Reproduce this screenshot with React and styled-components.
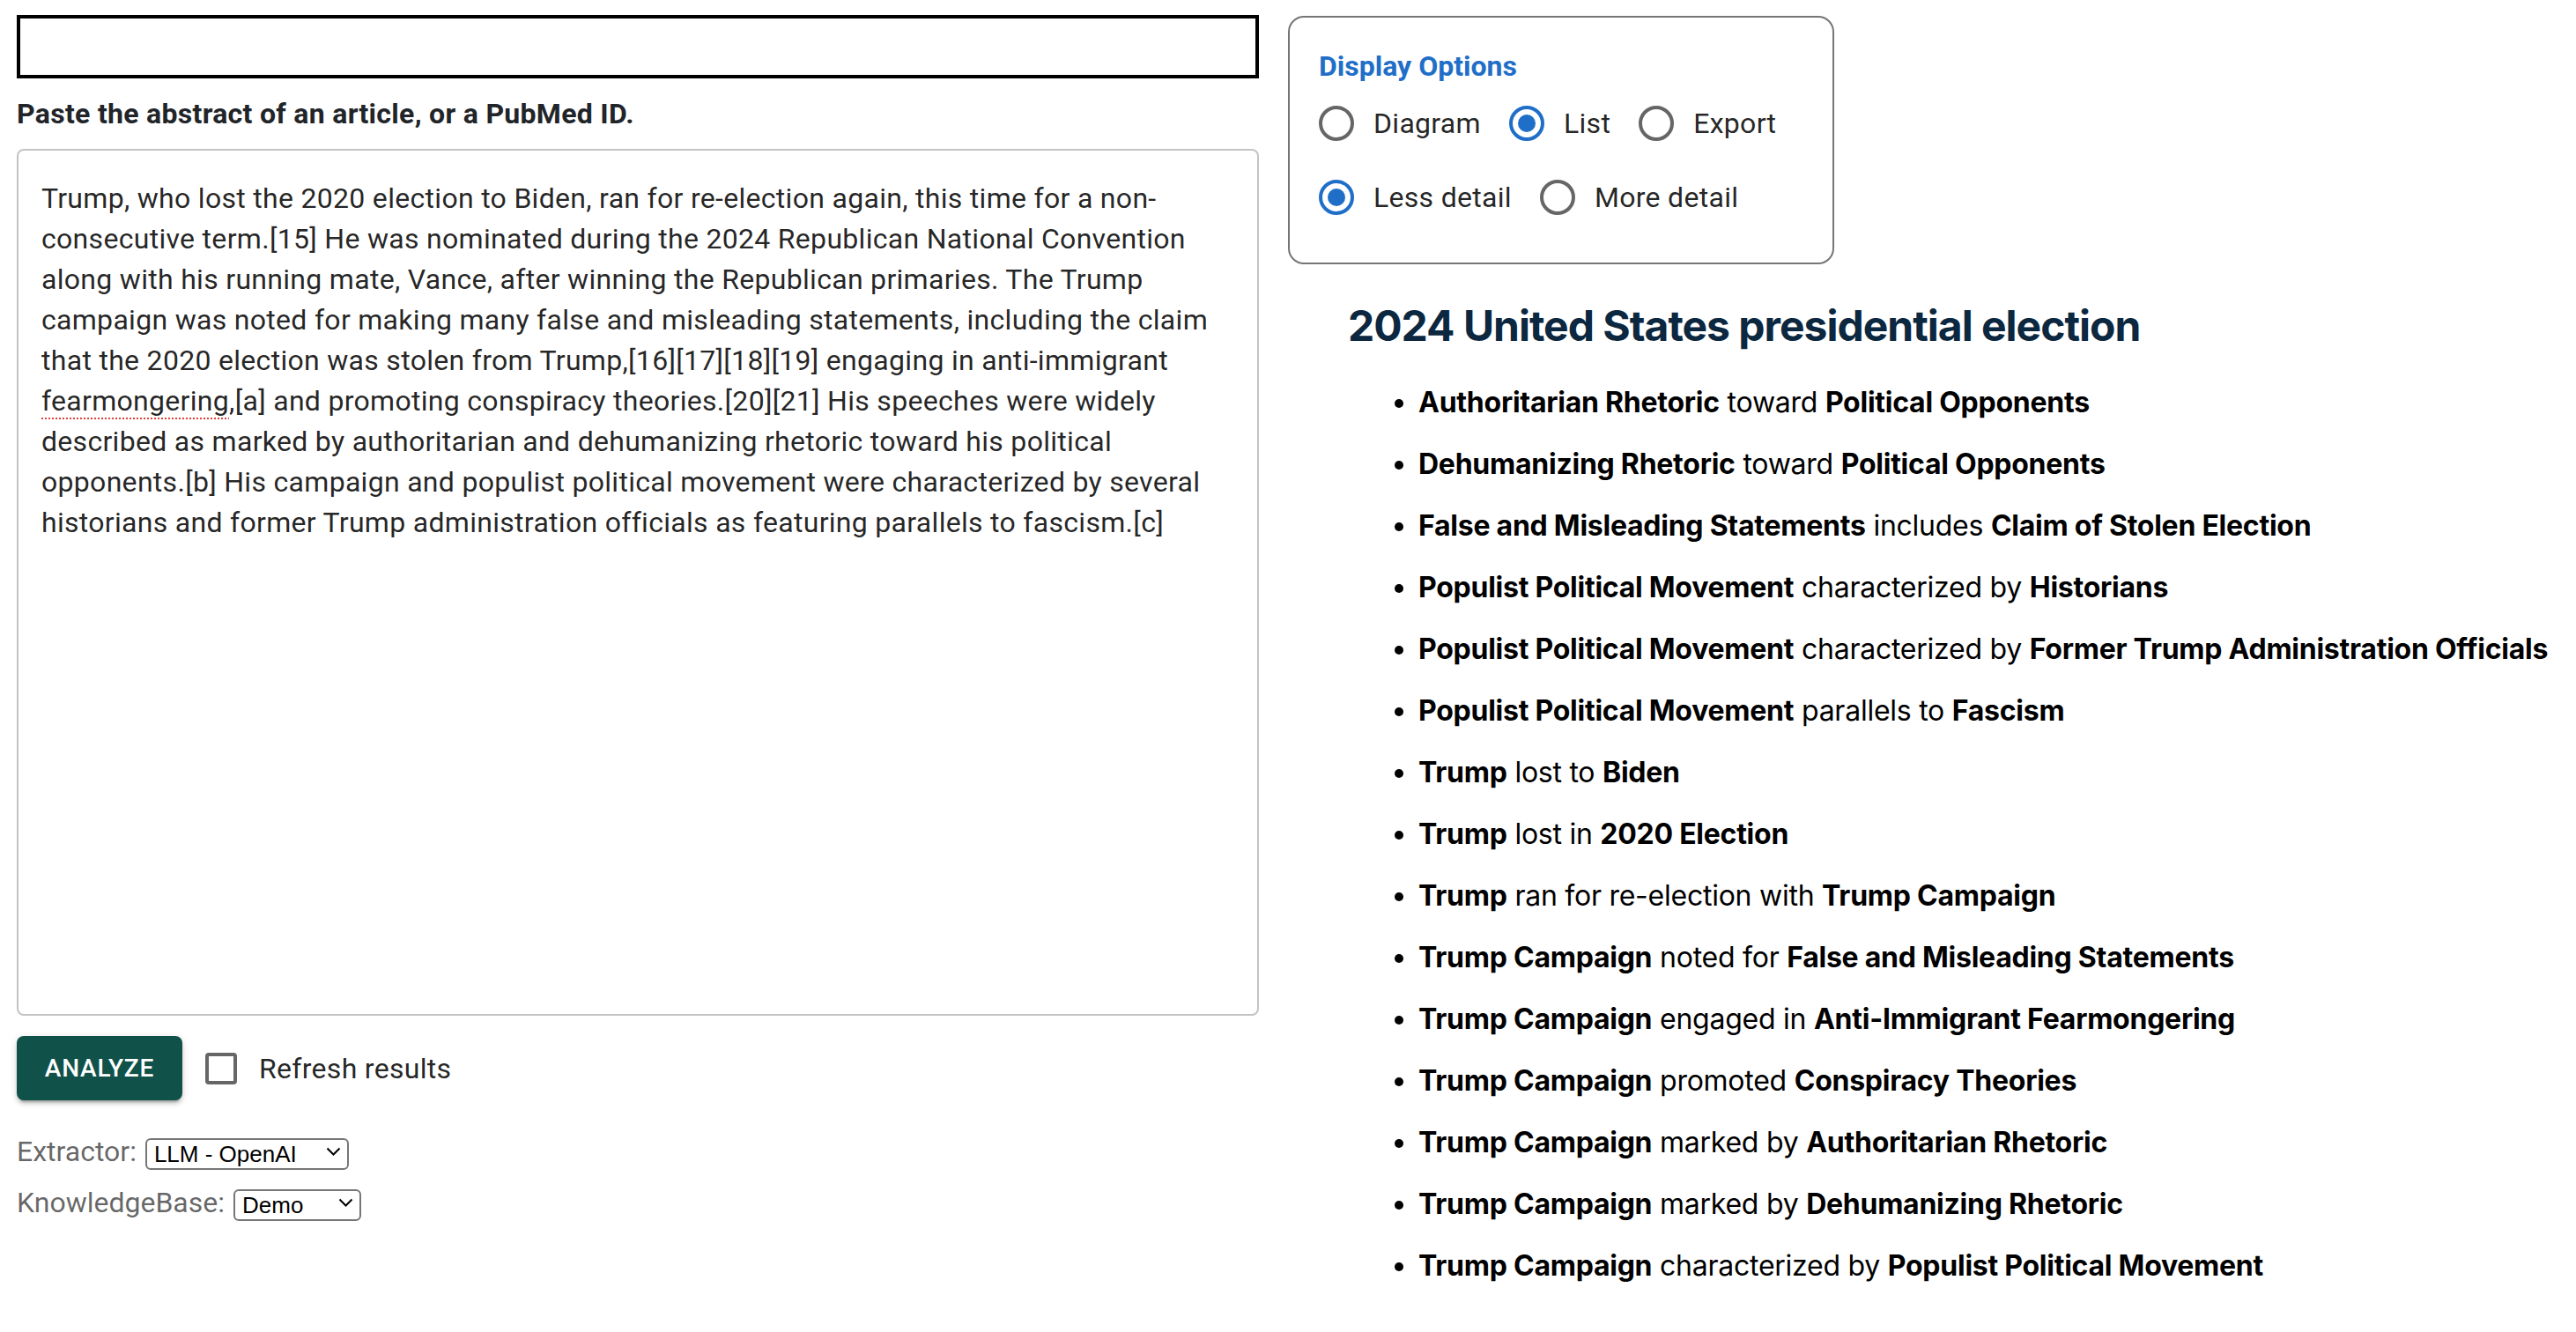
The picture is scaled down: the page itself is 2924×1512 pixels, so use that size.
import styled, { createGlobalStyle } from "styled-components";

const GlobalStyle = createGlobalStyle`
  html, body {
    margin: 0;
    padding: 0;
    background: #ffffff;
    overflow: hidden;
  }

  body {
    font-family: Roboto, "Liberation Sans", sans-serif;
  }
`;

const Page = styled.div`
  display: flex;
  align-items: flex-start;
  gap: 33px;
  padding: 17px 19px 0 19px;
`;

const LeftColumn = styled.div`
  display: flex;
  flex-direction: column;
  width: 1410px;
  flex-shrink: 0;
`;

const TopInput = styled.input`
  box-sizing: border-box;
  width: 100%;
  height: 72px;
  border: 4px solid #000000;
  border-radius: 0;
  outline: none;
  padding: 0 12px;
  font-family: Roboto, sans-serif;
  font-size: 32px;
`;

const PasteLabel = styled.label`
  display: block;
  margin: 16px 0 16px 0;
  font-family: Roboto, sans-serif;
  font-weight: 700;
  font-size: 32px;
  line-height: 48px;
  letter-spacing: 0.3px;
  color: #212529;
`;

const AbstractBox = styled.div`
  box-sizing: border-box;
  height: 984px;
  border: 2px solid #c4c4c4;
  border-radius: 8px;
  padding: 31px 26px;
  font-family: Roboto, sans-serif;
  font-size: 32px;
  line-height: 46px;
  letter-spacing: 0.3px;
  color: rgba(0, 0, 0, 0.87);
  white-space: pre-wrap;
  overflow: hidden;
`;

const Misspelled = styled.span`
  text-decoration: underline dotted #e0403a 2px;
  text-underline-offset: 8px;
`;

const ActionRow = styled.div`
  display: flex;
  align-items: center;
  margin-top: 23px;
`;

const AnalyzeButton = styled.button`
  box-sizing: border-box;
  width: 188px;
  height: 73px;
  border: none;
  border-radius: 8px;
  background: #10524a;
  color: #ffffff;
  font-family: Roboto, sans-serif;
  font-weight: 500;
  font-size: 28px;
  letter-spacing: 0.8px;
  text-transform: uppercase;
  box-shadow: 0px 6px 2px -4px rgba(0, 0, 0, 0.2),
    0px 4px 4px 0px rgba(0, 0, 0, 0.14), 0px 2px 10px 0px rgba(0, 0, 0, 0.12);
  cursor: pointer;
`;

const CheckLabel = styled.label`
  display: flex;
  align-items: center;
  margin-left: 26px;
  font-family: Roboto, sans-serif;
  font-size: 32px;
  letter-spacing: 0.3px;
  color: rgba(0, 0, 0, 0.87);
`;

const CheckBox = styled.span`
  box-sizing: border-box;
  width: 36px;
  height: 36px;
  border: 4px solid #666666;
  border-radius: 4px;
  margin-right: 25px;
`;

const SettingsList = styled.div`
  display: flex;
  flex-direction: column;
  gap: 20px;
  margin-top: 39px;
`;

const SettingRow = styled.div`
  display: flex;
  align-items: center;
  font-family: Roboto, sans-serif;
  font-size: 32px;
  color: rgba(0, 0, 0, 0.6);
`;

const SelectWrap = styled.span`
  position: relative;
  display: inline-block;
  margin-left: 10px;
  width: ${(p) => p.$width}px;
  height: 36px;
`;

const NativeSelect = styled.select`
  box-sizing: border-box;
  appearance: none;
  width: 100%;
  height: 100%;
  border: 2px solid #767676;
  border-radius: 6px;
  background: #ffffff;
  padding: 0 36px 0 8px;
  font-family: "Liberation Sans", Arial, sans-serif;
  font-size: 26px;
  color: #000000;
`;

const Chevron = styled.svg`
  position: absolute;
  right: 9px;
  top: 13px;
  pointer-events: none;
`;

const RightColumn = styled.div`
  display: flex;
  flex-direction: column;
  flex: 1;
  min-width: 0;
`;

const OptionsBox = styled.fieldset`
  box-sizing: border-box;
  width: fit-content;
  margin: 1px 0 0 0;
  border: 2px solid #767676;
  border-radius: 18px;
  padding: 32px 32px 32px 33px;
`;

const OptionsTitle = styled.div`
  font-family: Roboto, sans-serif;
  font-weight: 700;
  font-size: 32px;
  line-height: 46px;
  color: #1f6fc8;
`;

const RadioRow = styled.div`
  display: flex;
  align-items: center;
  height: 84px;
`;

const RadioLabel = styled.label`
  display: flex;
  align-items: center;
  margin-right: 32px;
  font-family: Roboto, sans-serif;
  font-size: 32px;
  letter-spacing: 0.3px;
  color: rgba(0, 0, 0, 0.87);
`;

const RadioCircle = styled.span`
  box-sizing: border-box;
  display: flex;
  align-items: center;
  justify-content: center;
  width: 40px;
  height: 40px;
  border-radius: 50%;
  border: 4px solid ${(p) => (p.$checked ? "#1f6fc8" : "#666666")};
  margin-right: 22px;

  &::after {
    content: "";
    display: ${(p) => (p.$checked ? "block" : "none")};
    width: 20px;
    height: 20px;
    border-radius: 50%;
    background: #1f6fc8;
  }
`;

const Results = styled.div`
  padding-left: 68px;
  font-family: Inter, "Liberation Sans", sans-serif;
`;

const ResultsTitle = styled.h2`
  margin: 41px 0 0 0;
  font-size: 48px;
  line-height: 57px;
  font-weight: 700;
  letter-spacing: -1px;
  color: #0c2840;
`;

const RelationList = styled.ul`
  margin: 35px 0 0 0;
  padding-left: 80px;
  color: #000000;
`;

const RelationItem = styled.li`
  font-size: 32px;
  line-height: 48px;
  margin-bottom: 22px;
  letter-spacing: -0.25px;
  white-space: nowrap;

  strong {
    font-weight: 700;
  }
`;

const relations = [
  ["Authoritarian Rhetoric", "toward", "Political Opponents"],
  ["Dehumanizing Rhetoric", "toward", "Political Opponents"],
  ["False and Misleading Statements", "includes", "Claim of Stolen Election"],
  ["Populist Political Movement", "characterized by", "Historians"],
  [
    "Populist Political Movement",
    "characterized by",
    "Former Trump Administration Officials",
  ],
  ["Populist Political Movement", "parallels to", "Fascism"],
  ["Trump", "lost to", "Biden"],
  ["Trump", "lost in", "2020 Election"],
  ["Trump", "ran for re-election with", "Trump Campaign"],
  ["Trump Campaign", "noted for", "False and Misleading Statements"],
  ["Trump Campaign", "engaged in", "Anti-Immigrant Fearmongering"],
  ["Trump Campaign", "promoted", "Conspiracy Theories"],
  ["Trump Campaign", "marked by", "Authoritarian Rhetoric"],
  ["Trump Campaign", "marked by", "Dehumanizing Rhetoric"],
  ["Trump Campaign", "characterized by", "Populist Political Movement"],
];

function Select({ width, value }) {
  return (
    <SelectWrap $width={width}>
      <NativeSelect defaultValue={value}>
        <option>{value}</option>
      </NativeSelect>
      <Chevron width="17" height="11" viewBox="0 0 17 11">
        <path d="M1.5 1.5 L8.5 8.5 L15.5 1.5" fill="none" stroke="#000" strokeWidth="2" />
      </Chevron>
    </SelectWrap>
  );
}

function Radio({ label, checked }) {
  return (
    <RadioLabel>
      <RadioCircle $checked={checked} />
      {label}
    </RadioLabel>
  );
}

function App() {
  return (
    <>
      <GlobalStyle />
      <Page>
        <LeftColumn>
          <TopInput type="text" />
          <PasteLabel>Paste the abstract of an article, or a PubMed ID.</PasteLabel>
          <AbstractBox>
            Trump, who lost the 2020 election to Biden, ran for re-election
            again, this time for a non-consecutive term.[15] He was nominated
            during the 2024 Republican National Convention along with his
            running mate, Vance, after winning the Republican primaries. The
            Trump campaign was noted for making many false and misleading
            statements, including the claim that the 2020 election was stolen
            from Trump,[16][17][18][19] engaging in anti-immigrant{" "}
            <Misspelled>fearmongering</Misspelled>,[a] and promoting conspiracy
            theories.[20][21] His speeches were widely described as marked by
            authoritarian and dehumanizing rhetoric toward his political
            opponents.[b] His campaign and populist political movement were
            characterized by several historians and former Trump administration
            officials as featuring parallels to fascism.[c]
          </AbstractBox>
          <ActionRow>
            <AnalyzeButton>Analyze</AnalyzeButton>
            <CheckLabel>
              <CheckBox />
              Refresh results
            </CheckLabel>
          </ActionRow>
          <SettingsList>
            <SettingRow>
              Extractor:
              <Select width={231} value="LLM - OpenAI" />
            </SettingRow>
            <SettingRow>
              KnowledgeBase:
              <Select width={145} value="Demo" />
            </SettingRow>
          </SettingsList>
        </LeftColumn>
        <RightColumn>
          <OptionsBox>
            <OptionsTitle>Display Options</OptionsTitle>
            <RadioRow>
              <Radio label="Diagram" />
              <Radio label="List" checked />
              <Radio label="Export" />
            </RadioRow>
            <RadioRow>
              <Radio label="Less detail" checked />
              <Radio label="More detail" />
            </RadioRow>
          </OptionsBox>
          <Results>
            <ResultsTitle>2024 United States presidential election</ResultsTitle>
            <RelationList>
              {relations.map(([subject, verb, object], i) => (
                <RelationItem key={i}>
                  <strong>{subject}</strong> {verb} <strong>{object}</strong>
                </RelationItem>
              ))}
            </RelationList>
          </Results>
        </RightColumn>
      </Page>
    </>
  );
}

export default App;
